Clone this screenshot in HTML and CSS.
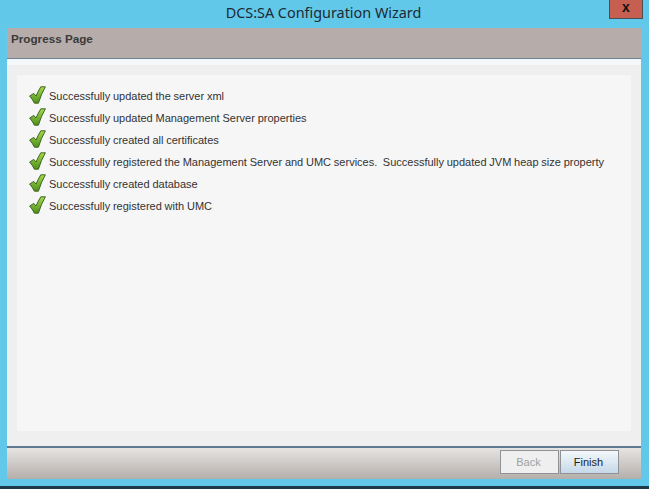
FILE: index.html
```html
<!DOCTYPE html>
<html lang="en">
<head>
    <meta charset="UTF-8">
    <meta name="viewport" content="width=device-width, initial-scale=1.0">
    <title>DCS:SA Configuration Wizard</title>
    <link rel="stylesheet" href="styles.css">
</head>
<body>
    <svg class="defs" width="0" height="0">
        <defs>
            <linearGradient id="tick" x1="0" y1="0" x2="0" y2="1">
                <stop offset="0" stop-color="#a6d94a"/>
                <stop offset="1" stop-color="#4f8f1c"/>
            </linearGradient>
            <symbol id="check" viewBox="0 0 17 18">
                <path d="M0.6 10 L4.8 7.4 L7 10 Q9.2 5 11.8 0.8 L16.4 0.8 Q12.2 8 9.4 17.2 L5.4 17.2 Q3.4 13 0.6 10 Z" fill="url(#tick)" stroke="#33591a" stroke-width="0.9" stroke-linejoin="round"/>
            </symbol>
        </defs>
    </svg>

    <div class="titlebar">
        <div class="title">DCS:SA Configuration Wizard</div>
        <div class="close">x</div>
    </div>

    <div class="window">
        <div class="page-head">Progress Page</div>
        <div class="strip"></div>
        <div class="content">
            <div class="panel">
                <div class="row"><svg class="tick"><use href="#check"/></svg><span>Successfully updated the server xml</span></div>
                <div class="row"><svg class="tick"><use href="#check"/></svg><span>Successfully updated Management Server properties</span></div>
                <div class="row"><svg class="tick"><use href="#check"/></svg><span>Successfully created all certificates</span></div>
                <div class="row"><svg class="tick"><use href="#check"/></svg><span>Successfully registered the Management Server and UMC services.  Successfully updated JVM heap size property</span></div>
                <div class="row"><svg class="tick"><use href="#check"/></svg><span>Successfully created database</span></div>
                <div class="row"><svg class="tick"><use href="#check"/></svg><span>Successfully registered with UMC</span></div>
            </div>
        </div>
        <div class="footer">
            <button class="btn btn-back" type="button">Back</button>
            <button class="btn btn-finish" type="button">Finish</button>
        </div>
    </div>
    <div class="bottom-edge"></div>
</body>
</html>
```

FILE: styles.css
```css
* {
    box-sizing: border-box;
    margin: 0;
    padding: 0;
}

html, body {
    height: 100%;
}

body {
    font-family: 'Liberation Sans', Arial, sans-serif;
    background-color: #62c8ea;
    color: #333;
    overflow: hidden;
    display: flex;
    flex-direction: column;
}

.defs {
    position: absolute;
}

.titlebar {
    height: 28px;
    display: grid;
    grid-template-columns: 1fr auto 1fr;
    padding: 0 6px 0 4px;
}

.title {
    grid-column: 2;
    font-family: 'Noto Sans', sans-serif;
    font-size: 14.4px;
    line-height: 26px;
    color: #1c2a33;
}

.close {
    grid-column: 3;
    justify-self: end;
    width: 34px;
    height: 19px;
    background: #c75f50;
    border: 1px solid #4a4f55;
    border-top: none;
    text-align: center;
    font-weight: bold;
    font-size: 14px;
    line-height: 14px;
    color: #111;
}

.window {
    margin: 0 8px 0 7px;
    height: 451px;
    display: flex;
    flex-direction: column;
}

.page-head {
    height: 31px;
    background: #b6adaa;
    border-bottom: 1px solid #6f8296;
    font-size: 11.7px;
    font-weight: bold;
    padding: 4px 4px;
    color: #3a3a3a;
}

.strip {
    height: 6px;
    background: #f5f8fa;
}

.content {
    flex: 1;
    background: #efefef;
    padding: 10px 10px 15px 10px;
    display: flex;
}

.panel {
    flex: 1;
    background: #f6f6f6;
    padding: 10px 12px;
}

.row {
    height: 22px;
    display: flex;
    align-items: center;
    gap: 3px;
    font-size: 11px;
    word-spacing: -0.27px;
    white-space: pre;
    color: #333;
}

.tick {
    width: 17px;
    height: 18px;
    flex: none;
    margin-top: -2px;
}

.footer {
    height: 33px;
    background: linear-gradient(#e6e4e2, #b5afab);
    border-top: 2px solid #5f7a90;
    display: flex;
    justify-content: flex-end;
    gap: 1px;
    padding: 2px 22px 0 0;
}

.btn {
    width: 59px;
    height: 24px;
    padding-right: 2px;
    font-family: 'Liberation Sans', Arial, sans-serif;
    font-size: 11px;
    border: 1px solid #8f9396;
    cursor: pointer;
}

.btn-back {
    background: #efefef;
    color: #a0a0a0;
}

.btn-finish {
    background: linear-gradient(#f4f8fb, #c6d8e8);
    color: #222;
}

.bottom-edge {
    margin-top: auto;
    height: 3px;
    background: #1c3a48;
}
```
